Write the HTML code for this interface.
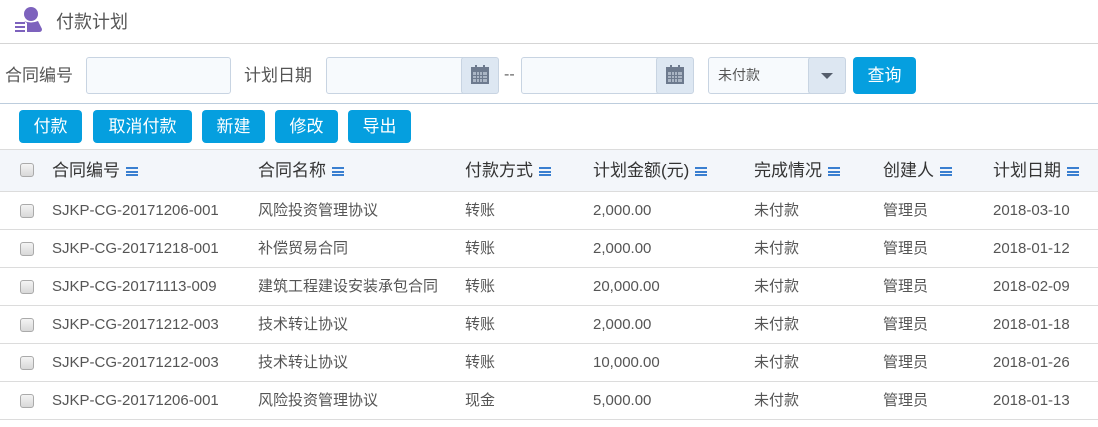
<!DOCTYPE html>
<html><head><meta charset="utf-8"><style>
*{box-sizing:border-box;margin:0;padding:0}
body{width:1098px;height:427px;background:#fff;font-family:"Liberation Sans","Noto Sans CJK SC",sans-serif;position:relative;overflow:hidden;color:#444}
.a{position:absolute}
.inp{position:absolute;top:57px;height:37px;border:1px solid #c8d4e2;border-radius:3px;background:#f7fafd}
.cal{position:absolute;top:57px;width:38px;height:37px;border:1px solid #c8d4e2;border-radius:3px;background:#dde7f2}
.btn{position:absolute;top:110px;height:33px;background:#059fdf;color:#fff;border-radius:4px;font-size:17px;line-height:33px;text-align:center}
.lbl{position:absolute;top:57px;height:37px;line-height:37px;font-size:17px;color:#555}
.hd{position:absolute;top:150px;height:42px;line-height:42px;font-size:17px;color:#333;white-space:nowrap}
.ham{display:inline-block;width:12px;height:9px;margin-left:6px;vertical-align:middle;border-top:2px solid #3a7fd0;border-bottom:2px solid #3a7fd0;position:relative}
.ham:after{content:"";position:absolute;left:0;right:0;top:1.5px;border-top:2px solid #3a7fd0}
.row{position:absolute;left:0;width:1098px;height:38px;border-bottom:1px solid #dcdcdc;font-size:15px;color:#555}
.row span{position:absolute;top:0;height:37px;line-height:37px;white-space:nowrap}
.cb{position:absolute;left:20px;width:14px;height:14px;border:1px solid #aaa;border-radius:3px;background:linear-gradient(#f4f4f4,#d8d8d8)}
</style></head><body>
<svg class="a" style="left:13px;top:4px" width="30" height="30" viewBox="0 0 30 30">
<circle cx="18" cy="10" r="7" fill="#7d62bd"/>
<path d="M11 17 Q18 20 25 17 L29 25 Q29 28 26 28 L14 28 L14 19 Z" fill="#7d62bd"/>
<rect x="2" y="18" width="10" height="2" fill="#7d62bd"/><rect x="2" y="22" width="10" height="2" fill="#7d62bd"/><rect x="2" y="26" width="10" height="2" fill="#7d62bd"/>
</svg>
<div class="a" style="left:56px;top:8px;font-size:18px;color:#555">付款计划</div>
<div class="a" style="left:0;top:43px;width:1098px;border-top:1px solid #d5d5d5"></div>

<div class="lbl" style="left:5px">合同编号</div>
<div class="inp" style="left:86px;width:145px"></div>
<div class="lbl" style="left:244px">计划日期</div>
<div class="inp" style="left:326px;width:140px"></div>
<div class="cal" style="left:461px"></div>
<div class="a" style="left:504px;top:66px;color:#666">--</div>
<div class="inp" style="left:521px;width:140px"></div>
<div class="cal" style="left:656px"></div>
<svg class="a" style="left:470px;top:64px" width="20" height="22"><rect x="1" y="3" width="18" height="17" fill="#6d7a8e"/><rect x="3" y="8" width="14" height="10" fill="#aab5c4"/><g fill="#6d7a8e"><rect x="6" y="8" width="1" height="10"/><rect x="9" y="8" width="1" height="10"/><rect x="12" y="8" width="1" height="10"/><rect x="3" y="11" width="14" height="1"/><rect x="3" y="14" width="14" height="1"/></g><rect x="5" y="1" width="2" height="4" fill="#6d7a8e"/><rect x="13" y="1" width="2" height="4" fill="#6d7a8e"/></svg>
<svg class="a" style="left:665px;top:64px" width="20" height="22"><rect x="1" y="3" width="18" height="17" fill="#6d7a8e"/><rect x="3" y="8" width="14" height="10" fill="#aab5c4"/><g fill="#6d7a8e"><rect x="6" y="8" width="1" height="10"/><rect x="9" y="8" width="1" height="10"/><rect x="12" y="8" width="1" height="10"/><rect x="3" y="11" width="14" height="1"/><rect x="3" y="14" width="14" height="1"/></g><rect x="5" y="1" width="2" height="4" fill="#6d7a8e"/><rect x="13" y="1" width="2" height="4" fill="#6d7a8e"/></svg>
<div class="inp" style="left:708px;width:105px"></div>
<div class="a" style="left:718px;top:57px;line-height:37px;font-size:14px;color:#555">未付款</div>
<div class="cal" style="left:808px"></div>
<div class="a" style="left:821px;top:73px;width:0;height:0;border-left:6px solid transparent;border-right:6px solid transparent;border-top:6px solid #555e6c"></div>
<div class="btn" style="left:853px;top:57px;width:63px;height:37px;line-height:37px">查询</div>
<div class="a" style="left:0;top:103px;width:1098px;border-top:1px solid #bdcddd"></div>

<div class="btn" style="left:19px;width:63px">付款</div>
<div class="btn" style="left:93px;width:99px">取消付款</div>
<div class="btn" style="left:202px;width:63px">新建</div>
<div class="btn" style="left:275px;width:63px">修改</div>
<div class="btn" style="left:348px;width:63px">导出</div>

<div class="a" style="left:0;top:149px;width:1098px;height:43px;background:#f3f6fa;border-top:1px solid #dcdcdc;border-bottom:1px solid #dcdcdc"></div>
<div class="cb" style="top:163px"></div>
<div class="hd" style="left:52px">合同编号<i class="ham"></i></div>
<div class="hd" style="left:258px">合同名称<i class="ham"></i></div>
<div class="hd" style="left:465px">付款方式<i class="ham"></i></div>
<div class="hd" style="left:593px">计划金额(元)<i class="ham"></i></div>
<div class="hd" style="left:754px">完成情况<i class="ham"></i></div>
<div class="hd" style="left:883px">创建人<i class="ham"></i></div>
<div class="hd" style="left:993px">计划日期<i class="ham"></i></div>

<div class="row" style="top:192px"><i class="cb" style="top:12px"></i><span style="left:52px">SJKP-CG-20171206-001</span><span style="left:258px">风险投资管理协议</span><span style="left:465px">转账</span><span style="left:593px">2,000.00</span><span style="left:754px">未付款</span><span style="left:883px">管理员</span><span style="left:993px">2018-03-10</span></div>
<div class="row" style="top:230px"><i class="cb" style="top:12px"></i><span style="left:52px">SJKP-CG-20171218-001</span><span style="left:258px">补偿贸易合同</span><span style="left:465px">转账</span><span style="left:593px">2,000.00</span><span style="left:754px">未付款</span><span style="left:883px">管理员</span><span style="left:993px">2018-01-12</span></div>
<div class="row" style="top:268px"><i class="cb" style="top:12px"></i><span style="left:52px">SJKP-CG-20171113-009</span><span style="left:258px">建筑工程建设安装承包合同</span><span style="left:465px">转账</span><span style="left:593px">20,000.00</span><span style="left:754px">未付款</span><span style="left:883px">管理员</span><span style="left:993px">2018-02-09</span></div>
<div class="row" style="top:306px"><i class="cb" style="top:12px"></i><span style="left:52px">SJKP-CG-20171212-003</span><span style="left:258px">技术转让协议</span><span style="left:465px">转账</span><span style="left:593px">2,000.00</span><span style="left:754px">未付款</span><span style="left:883px">管理员</span><span style="left:993px">2018-01-18</span></div>
<div class="row" style="top:344px"><i class="cb" style="top:12px"></i><span style="left:52px">SJKP-CG-20171212-003</span><span style="left:258px">技术转让协议</span><span style="left:465px">转账</span><span style="left:593px">10,000.00</span><span style="left:754px">未付款</span><span style="left:883px">管理员</span><span style="left:993px">2018-01-26</span></div>
<div class="row" style="top:382px"><i class="cb" style="top:12px"></i><span style="left:52px">SJKP-CG-20171206-001</span><span style="left:258px">风险投资管理协议</span><span style="left:465px">现金</span><span style="left:593px">5,000.00</span><span style="left:754px">未付款</span><span style="left:883px">管理员</span><span style="left:993px">2018-01-13</span></div>
</body></html>
